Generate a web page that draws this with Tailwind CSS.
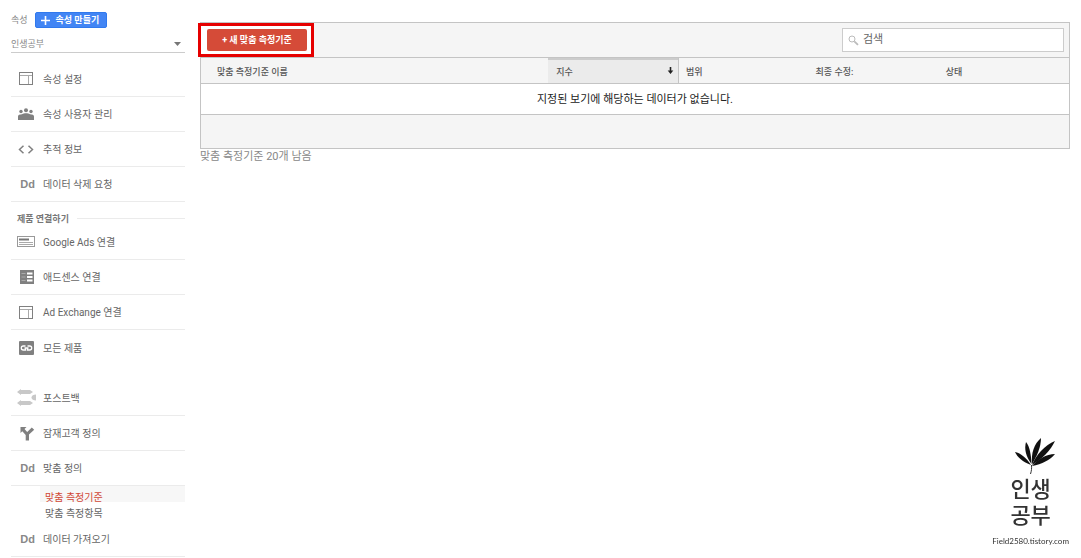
<!DOCTYPE html>
<html lang="ko">
<head>
  <meta charset="UTF-8">
  <meta name="viewport" content="width=device-width, initial-scale=1">
  <title>맞춤 측정기준</title>
  <script src="https://cdn.jsdelivr.net/npm/@tailwindcss/browser@4"></script>
</head>
<body class="bg-white min-h-screen flex items-start font-['Roboto','Noto_Sans_CJK_KR',sans-serif] text-[11px] leading-4 text-[#666]">

  <!-- sidebar -->
  <aside class="w-[174px] shrink-0 ml-[11px] pt-3">
    <div class="flex items-center gap-[7px] h-4">
      <label for="property" class="text-[9px] text-[#888]">속성</label>
      <button class="flex items-center gap-[6px] h-4 w-[72px] pl-[5px] rounded-xs bg-[#4285f4] border border-[#3079ed] text-white text-[9px] font-bold whitespace-nowrap">
        <svg class="w-[9px] h-[9px] shrink-0" viewBox="0 0 9 9" stroke="currentColor" stroke-width="1.6"><path d="M4.500 0v9M0 4.500h9"/></svg>
        속성 만들기
      </button>
    </div>
    <div class="relative mt-2">
      <select id="property" class="appearance-none w-full h-[17px] border-b border-[#ccc] text-[9px] leading-4 text-[#888] bg-white">
        <option>인생공부</option>
      </select>
      <svg class="absolute right-1 top-[6px] w-[7px] h-1 pointer-events-none" viewBox="0 0 7 4" fill="#777"><path d="M0 0h7L3.500 4z"/></svg>
    </div>

    <nav class="mt-[9px] text-[10px]">
      <ul>
        <li><a href="#" class="flex items-center gap-2 h-[35px] pl-[6px] border-b border-[#ebebeb]">
          <svg class="w-[18px] h-4" viewBox="0 0 18 16" fill="none" stroke="#808080"><rect x="2.500" y="1.500" width="13" height="12"/><path d="M3 4.500h12M11.500 5v8" stroke="#aaa"/></svg>
          <span class="pt-[2px]">속성 설정</span></a></li>
        <li><a href="#" class="flex items-center gap-2 h-[35px] pl-[6px] border-b border-[#ebebeb]">
          <svg class="w-[18px] h-4" viewBox="0 0 18 16" fill="#808080"><circle cx="4" cy="5.500" r="1.700"/><circle cx="9" cy="4.300" r="2"/><circle cx="14" cy="5.500" r="1.700"/><path d="M1 14v-3.500C1 9 2.500 8.500 5 8.300 6 7.500 7.500 7.300 9 7.300s3 .2 4 1c2.500.2 4 .7 4 2.200V14z"/></svg>
          <span class="pt-[2px]">속성 사용자 관리</span></a></li>
        <li><a href="#" class="flex items-center gap-2 h-[35px] pl-[6px] border-b border-[#ebebeb]">
          <svg class="w-[18px] h-4" viewBox="0 0 18 16" fill="none" stroke="#808080" stroke-width="1.500"><path d="M6.500 4.700L2.500 8.500l4 3.800M11.500 4.700l4 3.800-4 3.800"/></svg>
          <span class="pt-[2px]">추적 정보</span></a></li>
        <li><a href="#" class="flex items-center gap-2 h-[35px] pl-[6px] border-b border-[#ebebeb]">
          <span class="w-[18px] text-right font-['Liberation_Sans',sans-serif] text-[11px] font-bold text-[#888]">Dd</span>
          <span class="pt-[2px]">데이터 삭제 요청</span></a></li>
      </ul>

      <div class="flex items-center gap-2 h-[23px] pl-[6px] pt-[10px]">
        <h2 class="text-[9px] font-bold text-[#777] whitespace-nowrap">제품 연결하기</h2>
        <span class="grow h-px bg-[#ebebeb]"></span>
      </div>

      <ul>
        <li><a href="#" class="flex items-center gap-2 h-[35px] pl-[6px] border-b border-[#ebebeb]">
          <svg class="w-[18px] h-4" viewBox="0 0 18 16" fill="none" stroke="#999"><rect x=".5" y="2.500" width="17" height="10"/><path d="M2 5.500h10" stroke="#777" stroke-width="2"/><path d="M2 8.500h14M2 10.500h14" stroke="#aaa"/></svg>
          <span class="pt-[2px]">Google Ads 연결</span></a></li>
        <li><a href="#" class="flex items-center gap-2 h-[35px] pl-[6px] border-b border-[#ebebeb]">
          <svg class="w-[18px] h-4" viewBox="0 0 18 16"><rect x="3" y="1" width="14" height="14" fill="#808080"/><path d="M10 3.500h5.500v2H10zM10 7h5.500v2H10zM10 10.500h5.500v2H10z" fill="#fff"/><path d="M4.500 4.500h4M4.500 8h4M4.500 11.500h4" stroke="#aaa"/></svg>
          <span class="pt-[2px]">애드센스 연결</span></a></li>
        <li><a href="#" class="flex items-center gap-2 h-[35px] pl-[6px] border-b border-[#ebebeb]">
          <svg class="w-[18px] h-4" viewBox="0 0 18 16" fill="none" stroke="#808080"><rect x="2.500" y="2.500" width="13" height="12"/><path d="M3 5.500h12M11.500 6v8" stroke="#aaa"/></svg>
          <span class="pt-[2px]">Ad Exchange 연결</span></a></li>
        <li><a href="#" class="flex items-center gap-2 h-[35px] pl-[6px]">
          <svg class="w-[18px] h-4" viewBox="0 0 18 16"><rect x="2" y="1" width="15" height="14" rx="1" fill="#808080"/><path d="M8.500 6H6.300a2 2 0 0 0 0 4h2.200V8M10.500 6h2.200a2 2 0 0 1 0 4h-2.200V8M7.500 8h4" fill="none" stroke="#fff" stroke-width="1.300"/></svg>
          <span class="pt-[2px]">모든 제품</span></a></li>
      </ul>

      <ul class="mt-4">
        <li><a href="#" class="flex items-center gap-2 h-[35px] pl-[6px] border-b border-[#ebebeb]">
          <svg class="w-[19px] -mr-px h-[18px]" viewBox="0 0 19 18" fill="#c8c8c8"><path d="M0 3L4 0v1h9l3 2-3 2H4v1zM0 14l4-3v1h9l3 2-3 2H4v1z"/><path d="M19 5.500v6c-2.500 0-4.500-1-4.500-3s2-3 4.500-3z"/></svg>
          <span class="pt-[2px]">포스트백</span></a></li>
        <li><a href="#" class="flex items-center gap-2 h-[35px] pl-[6px] border-b border-[#ebebeb]">
          <svg class="w-[18px] h-4" viewBox="0 0 18 16" fill="#808080"><path d="M3.500 2h6L7.500 4l2.700 2.900 4.600-4.400 2.400 2.200L12 9.500v6H8.700V10L5.300 6.300 3.500 8z"/></svg>
          <span class="pt-[2px]">잠재고객 정의</span></a></li>
        <li><a href="#" class="flex items-center gap-2 h-[35px] pl-[6px] border-b border-[#ebebeb]">
          <span class="w-[18px] text-right font-['Liberation_Sans',sans-serif] text-[11px] font-bold text-[#888]">Dd</span>
          <span class="pt-[2px]">맞춤 정의</span></a>
          <ul class="ml-[29px] pb-1">
            <li><a href="#" class="block h-4 pl-[5px] pt-1 bg-[#f7f7f7] text-[#d14836]">맞춤 측정기준</a></li>
            <li><a href="#" class="block h-4 pl-[5px] pt-1">맞춤 측정항목</a></li>
          </ul>
        </li>
        <li><a href="#" class="flex items-center gap-2 h-[35px] pl-[6px] border-b border-[#ebebeb]">
          <span class="w-[18px] text-right font-['Liberation_Sans',sans-serif] text-[11px] font-bold text-[#888]">Dd</span>
          <span class="pt-[2px]">데이터 가져오기</span></a></li>
      </ul>
    </nav>
  </aside>

  <!-- custom dimensions table -->
  <main class="grow min-w-0 ml-[15px] mr-[11px] mt-[22px]">
    <div class="border border-[#c4c4c4] bg-[#f5f5f5]">
      <div class="flex items-start justify-between h-[34px] pt-[5px] pl-[6px] pr-[5px]">
        <div class="relative mt-px">
          <span class="absolute -left-[9px] -right-[7px] -inset-y-[6px] border-3 border-[#e60000] bg-white"></span>
          <button class="relative block w-[100px] h-[22px] rounded-xs bg-[#d54b38] text-white text-[9px] font-bold">+ 새 맞춤 측정기준</button>
        </div>
        <label class="flex items-center gap-1 w-[222px] h-6 px-[5px] bg-white border border-[#ccc]">
          <svg class="w-[11px] h-[11px] shrink-0" viewBox="0 0 11 11" fill="none" stroke="#bbb"><circle cx="4" cy="4" r="3"/><path d="M6.300 6.300L10 9.800" stroke-width="1.800"/></svg>
          <input type="text" placeholder="검색" aria-label="검색" class="w-full outline-none placeholder:text-[#666]">
        </label>
      </div>

      <table class="w-full table-fixed">
        <thead>
          <tr class="h-[26px] border-y border-[#c4c4c4] text-[9px] text-[#555] text-left">
            <th class="w-[40%] pl-4 pt-[2px] font-medium">맞춤 측정기준 이름</th>
            <th class="w-[15%] pl-2 pr-1 pt-[2px] font-medium bg-[#ebebeb] border-r border-r-[#c4c4c4] shadow-[inset_0_2px_0_#ccc]">
              <div class="flex items-center justify-between">지수
                <svg class="w-[7px] h-[7px] mb-[2px]" viewBox="0 0 7 7" fill="#222"><path d="M2.700 0h1.600v3.500h2L3.500 7 .700 3.500h2z"/></svg>
              </div>
            </th>
            <th class="w-[15%] pl-[7px] pt-[2px] font-medium">범위</th>
            <th class="w-[15%] pl-[7px] pt-[2px] font-medium">최종 수정:</th>
            <th class="w-[15%] pl-[7px] pt-[2px] font-medium">상태</th>
          </tr>
        </thead>
        <tbody>
          <tr class="h-[31px] bg-white border-b border-[#c4c4c4] text-[#222]">
            <td colspan="5" class="text-center pt-px">지정된 보기에 해당하는 데이터가 없습니다.</td>
          </tr>
        </tbody>
      </table>
      <div class="h-[33px]"></div>
    </div>
    <p class="text-[#888]">맞춤 측정기준 20개 남음</p>
  </main>

  <!-- blog watermark -->
  <div class="fixed right-3 bottom-[11px] flex flex-col items-center text-[#333]">
    <svg class="w-[42px] h-[38px] ml-2" viewBox="0 0 42 38" fill="#111">
      <path d="M17 28C9 25 3 20 1 15c5 1 11 5 16 13z"/>
      <path d="M17.500 27C12 20 10 12 12 5c4 5 5 13 5.500 22z"/>
      <path d="M18 27C17 16 20 7 27 1c0 9-4 18-9 26z"/>
      <path d="M18 28C22 18 31 8 41 4c-4 9-13 18-23 24z"/>
      <path d="M18 29c6-7 14-12 23-12-5 6-13 10-23 12z"/>
      <path d="M17.500 28c.3 3 0 6-1 9" fill="none" stroke="#333"/>
    </svg>
    <p class="text-center text-[22px] leading-[26px] font-medium pt-[2px]">인생<br>공부</p>
    <p class="font-['Lato',sans-serif] text-[8px] leading-3 mt-[6px]">Field2580.tistory.com</p>
  </div>

</body>
</html>
